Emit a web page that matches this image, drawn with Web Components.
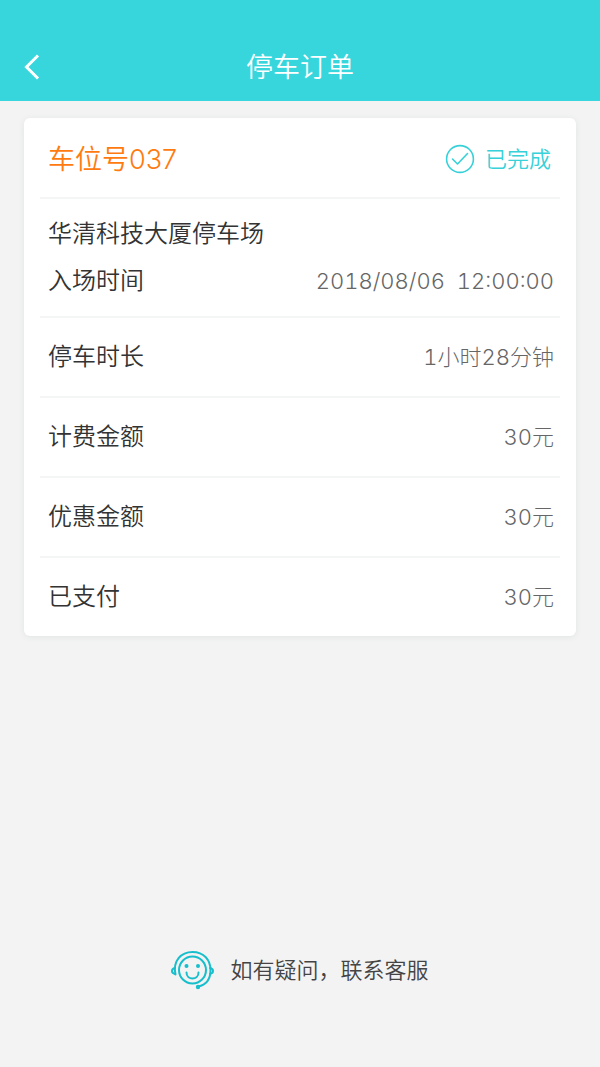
<!DOCTYPE html>
<html lang="zh-CN">
<head>
<meta charset="utf-8">
<meta name="viewport" content="width=device-width, initial-scale=1">
<title>停车订单</title>
<style>
  html, body { margin: 0; }
  body {
    background: #f3f3f3;
    color: #333;
    font-family: Inter, "Noto Sans CJK SC", sans-serif;
    font-weight: 350;
  }
</style>
</head>
<body>
<parking-page>
  <nav-bar slot="header">停车订单</nav-bar>
  <order-card>
    <order-head>车位号037<span slot="status">已完成</span></order-head>
    <order-section class="tight">
      <order-line>华清科技大厦停车场</order-line>
      <order-line>入场时间<span slot="value">2018/08/06&nbsp; 12:00:00</span></order-line>
    </order-section>
    <order-section><order-line>停车时长<span slot="value">1小时28分钟</span></order-line></order-section>
    <order-section><order-line>计费金额<span slot="value">30元</span></order-line></order-section>
    <order-section><order-line>优惠金额<span slot="value">30元</span></order-line></order-section>
    <order-section><order-line>已支付<span slot="value">30元</span></order-line></order-section>
  </order-card>
  <service-link slot="footer">如有疑问，联系客服</service-link>
</parking-page>

<script>
const define = (name, html) => {
  const template = document.createElement('template');
  template.innerHTML = html;
  customElements.define(name, class extends HTMLElement {
    constructor() {
      super();
      this.attachShadow({ mode: 'open' }).append(template.content.cloneNode(true));
    }
  });
};

define('parking-page', `
  <style>
    :host { display: flex; flex-direction: column; min-height: 100vh; }
    main { flex: 1; padding: 17px 24px 24px; }
    footer { display: flex; justify-content: center; padding-bottom: 77px; }
  </style>
  <slot name="header"></slot>
  <main><slot></slot></main>
  <footer><slot name="footer"></slot></footer>
`);

define('nav-bar', `
  <style>
    :host { display: block; background: #37d6dd; color: #fff; }
    header {
      display: grid; grid-template-columns: 48px 1fr 48px; align-items: center;
      padding: 32px 8px 0; height: 69px;
    }
    button {
      display: flex; align-items: center; justify-content: center;
      height: 48px; padding: 0; border: 0; background: none; color: inherit;
    }
    h1 { margin: 0; padding-top: 3px; font-size: 27px; line-height: 40px; font-weight: inherit; text-align: center; }
  </style>
  <header>
    <button type="button" aria-label="返回">
      <svg width="18" height="26" viewBox="0 0 18 26" fill="none" stroke="currentColor" stroke-width="3"><path d="M15 1.500 3.500 13 15 24.500"/></svg>
    </button>
    <h1><slot></slot></h1>
  </header>
`);

define('order-card', `
  <style>
    :host {
      display: block; padding: 0 16px; background: #fff; border-radius: 6px;
      box-shadow: 0 1px 6px rgba(60, 90, 90, .09);
    }
    ::slotted(:not(:last-child)) { border-bottom: 2px solid #f4f5f5; }
  </style>
  <slot></slot>
`);

define('order-head', `
  <style>
    :host { display: flex; align-items: center; justify-content: space-between; height: 77px; padding: 2px 9px 0 8px; }
    h2 { margin: 0; padding-top: 2px; font-size: 27px; line-height: 40px; font-weight: inherit; color: #ff7b10; }
    .status { display: flex; align-items: center; gap: 10px; font-size: 22px; line-height: 32px; color: #37d1d9; }
  </style>
  <h2><slot></slot></h2>
  <div class="status">
    <svg width="30" height="30" viewBox="0 0 30 30" fill="none" stroke="currentColor" stroke-width="1.6" stroke-linecap="round" stroke-linejoin="round" aria-hidden="true"><circle cx="15" cy="15" r="13.4"/><path d="m7.500 15 5 5L22.500 9.500"/></svg>
    <slot name="status"></slot>
  </div>
`);

define('order-section', `
  <style>
    :host { display: flex; flex-direction: column; gap: 11px; padding: 21px 6px 21px 8px; }
    :host(.tight) { padding-top: 17px; padding-bottom: 17px; }
  </style>
  <slot></slot>
`);

define('order-line', `
  <style>
    :host { display: flex; align-items: center; justify-content: space-between; font-size: 24px; line-height: 36px; }
    .value { font-size: 22px; font-weight: 300; font-variant-numeric: tabular-nums; color: #666; }
  </style>
  <span class="label"><slot></slot></span>
  <span class="value"><slot name="value"></slot></span>
`);

define('service-link', `
  <style>
    :host { display: block; }
    a { display: flex; align-items: center; gap: 16px; color: #444; font-size: 22px; line-height: 40px; text-decoration: none; }
  </style>
  <a href="#service">
    <svg width="43" height="40" viewBox="0 0 43 40" fill="none" stroke="#17becb" stroke-width="2" stroke-linecap="round" aria-hidden="true">
      <circle cx="21.500" cy="20" r="13.500"/>
      <path d="M4.500 24.500C1.500 11 10 2 21.500 2S39.500 10 39.500 20C39.500 29 35 35 27 36.500"/>
      <path d="M4 18c-4 1-4 5 0 6M39 18c4 1 4 5 0 6"/>
      <path d="M15.500 22.500c0 8 12 8 12 0"/>
      <g fill="#17becb" stroke="none"><circle cx="15.500" cy="16" r="2"/><circle cx="27" cy="16" r="2"/><circle cx="27" cy="37" r="2.200"/></g>
    </svg>
    <span><slot></slot></span>
  </a>
`);
</script>
</body>
</html>
